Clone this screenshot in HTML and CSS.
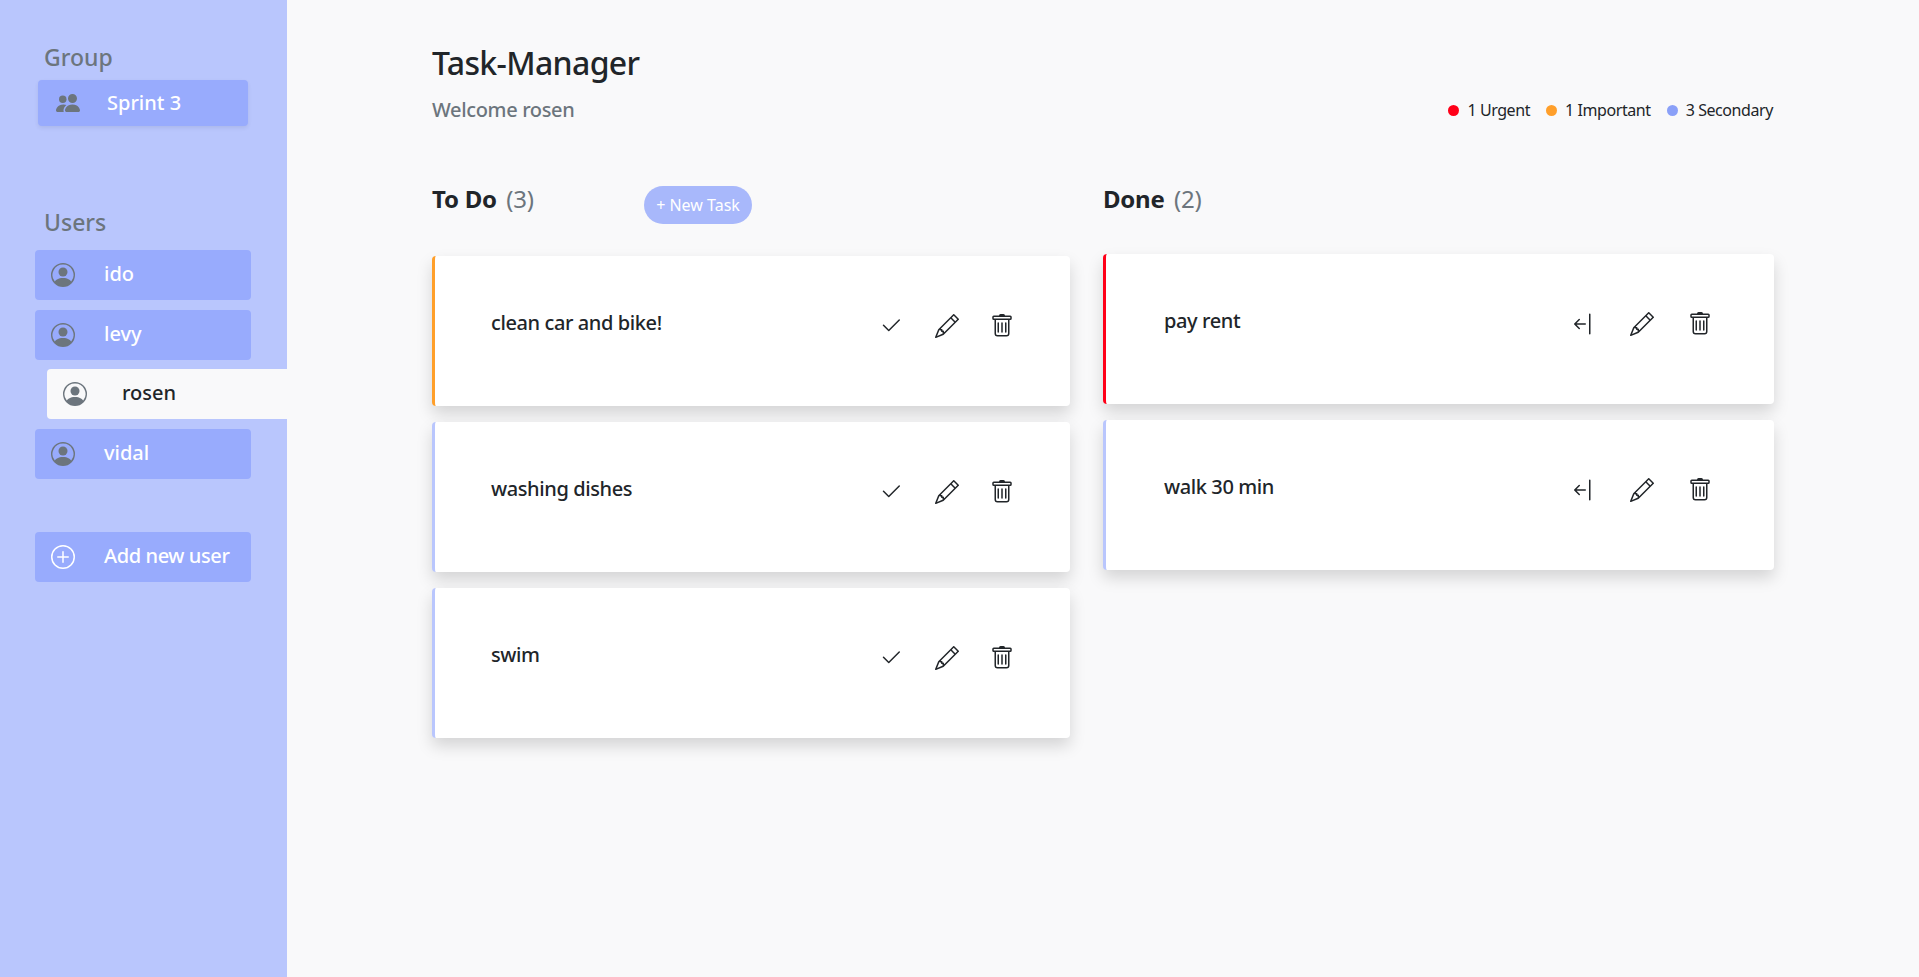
FILE: index.html
```html
<!DOCTYPE html>
<html lang="en">
<head>
<meta charset="utf-8">
<title>Task-Manager</title>
<link rel="stylesheet" href="styles.css">
</head>
<body>
<svg class="defs" aria-hidden="true">
  <symbol id="i-check" viewBox="0 0 16 16"><path d="M13.854 3.646a.5.5 0 0 1 0 .708l-7 7a.5.5 0 0 1-.708 0l-3.5-3.5a.5.5 0 1 1 .708-.708L6.5 10.293l6.646-6.647a.5.5 0 0 1 .708 0z"/></symbol>
  <symbol id="i-pencil" viewBox="0 0 16 16"><path d="M12.146.146a.5.5 0 0 1 .708 0l3 3a.5.5 0 0 1 0 .708l-10 10a.5.5 0 0 1-.168.11l-5 2a.5.5 0 0 1-.65-.65l2-5a.5.5 0 0 1 .11-.168l10-10zM11.207 2.5 13.5 4.793 14.793 3.5 12.5 1.207 11.207 2.5zm1.586 3L10.5 3.207 4 9.707V10h.5a.5.5 0 0 1 .5.5v.5h.5a.5.5 0 0 1 .5.5v.5h.293l6.5-6.5zm-9.761 5.175-.106.106-1.528 3.821 3.821-1.528.106-.106A.5.5 0 0 1 5 12.5V12h-.5a.5.5 0 0 1-.5-.5V11h-.5a.5.5 0 0 1-.468-.325z"/></symbol>
  <symbol id="i-trash" viewBox="0 0 16 16"><path d="M5.5 5.5A.5.5 0 0 1 6 6v6a.5.5 0 0 1-1 0V6a.5.5 0 0 1 .5-.5zm2.5 0a.5.5 0 0 1 .5.5v6a.5.5 0 0 1-1 0V6a.5.5 0 0 1 .5-.5zm3 .5a.5.5 0 0 0-1 0v6a.5.5 0 0 0 1 0V6z"/><path fill-rule="evenodd" d="M14.5 3a1 1 0 0 1-1 1H13v9a2 2 0 0 1-2 2H5a2 2 0 0 1-2-2V4h-.5a1 1 0 0 1-1-1V2a1 1 0 0 1 1-1H6a1 1 0 0 1 1-1h2a1 1 0 0 1 1 1h3.5a1 1 0 0 1 1 1v1zM4.118 4 4 4.059V13a1 1 0 0 0 1 1h6a1 1 0 0 0 1-1V4.059L11.882 4H4.118zM2.5 3V2h11v1h-11z"/></symbol>
  <symbol id="i-back" viewBox="0 0 16 16"><path fill-rule="evenodd" d="M12.5 15a.5.5 0 0 1-.5-.5v-13a.5.5 0 0 1 1 0v13a.5.5 0 0 1-.5.5zM10 8a.5.5 0 0 1-.5.5H3.707l2.147 2.146a.5.5 0 0 1-.708.708l-3-3a.5.5 0 0 1 0-.708l3-3a.5.5 0 1 1 .708.708L3.707 7.5H9.5a.5.5 0 0 1 .5.5z"/></symbol>
  <symbol id="i-user" viewBox="0 0 16 16"><path d="M11 6a3 3 0 1 1-6 0 3 3 0 0 1 6 0z"/><path fill-rule="evenodd" d="M0 8a8 8 0 1 1 16 0A8 8 0 0 1 0 8zm8-7a7 7 0 0 0-5.468 11.37C3.242 11.226 4.805 10 8 10s4.757 1.225 5.468 2.37A7 7 0 0 0 8 1z"/></symbol>
  <symbol id="i-plus" viewBox="0 0 16 16"><path d="M8 15A7 7 0 1 1 8 1a7 7 0 0 1 0 14zm0 1A8 8 0 1 0 8 0a8 8 0 0 0 0 16z"/><path d="M8 4a.5.5 0 0 1 .5.5v3h3a.5.5 0 0 1 0 1h-3v3a.5.5 0 0 1-1 0v-3h-3a.5.5 0 0 1 0-1h3v-3A.5.5 0 0 1 8 4z"/></symbol>
  <symbol id="i-people" viewBox="0 0 16 16"><path d="M7 14s-1 0-1-1 1-4 5-4 5 3 5 4-1 1-1 1H7zm4-6a3 3 0 1 0 0-6 3 3 0 0 0 0 6z"/><path fill-rule="evenodd" d="M5.216 14A2.238 2.238 0 0 1 5 13c0-1.355.68-2.75 1.936-3.72A6.325 6.325 0 0 0 5 9c-4 0-5 3-5 4s1 1 1 1h4.216z"/><path d="M4.5 8a2.5 2.5 0 1 0 0-5 2.5 2.5 0 0 0 0 5z"/></symbol>
</svg>

<div class="app">
  <aside class="sidebar">
    <h4 class="side-title">Group</h4>
    <div class="group-btn">
      <svg class="icon icon-grey"><use href="#i-people"/></svg>
      <span class="label label-group">Sprint 3</span>
    </div>
    <h4 class="side-title users-title">Users</h4>
    <ul class="user-list">
      <li class="user"><svg class="icon icon-grey"><use href="#i-user"/></svg><span class="label">ido</span></li>
      <li class="user"><svg class="icon icon-grey"><use href="#i-user"/></svg><span class="label">levy</span></li>
      <li class="user user-active"><svg class="icon icon-grey"><use href="#i-user"/></svg><span class="label">rosen</span></li>
      <li class="user"><svg class="icon icon-grey"><use href="#i-user"/></svg><span class="label">vidal</span></li>
    </ul>
    <div class="user add-user"><svg class="icon icon-white"><use href="#i-plus"/></svg><span class="label">Add new user</span></div>
  </aside>

  <main class="main">
    <header class="top">
      <h2 class="title">Task-Manager</h2>
      <div class="subrow">
        <p class="welcome">Welcome rosen</p>
        <div class="legend">
          <span class="legend-item"><i class="dot dot-urgent"></i>1 Urgent</span>
          <span class="legend-item"><i class="dot dot-important"></i>1 Important</span>
          <span class="legend-item"><i class="dot dot-secondary"></i>3 Secondary</span>
        </div>
      </div>
    </header>

    <div class="board">
      <section class="col col-todo">
        <div class="col-head">
          <h4 class="col-title">To Do<span class="count">(3)</span></h4>
          <button class="new-task">+ New Task</button>
        </div>
        <article class="card card-important">
          <span class="card-text">clean car and bike!</span>
          <div class="actions">
            <svg class="icon"><use href="#i-check"/></svg><svg class="icon"><use href="#i-pencil"/></svg><svg class="icon"><use href="#i-trash"/></svg>
          </div>
        </article>
        <article class="card card-secondary">
          <span class="card-text">washing dishes</span>
          <div class="actions">
            <svg class="icon"><use href="#i-check"/></svg><svg class="icon"><use href="#i-pencil"/></svg><svg class="icon"><use href="#i-trash"/></svg>
          </div>
        </article>
        <article class="card card-secondary">
          <span class="card-text">swim</span>
          <div class="actions">
            <svg class="icon"><use href="#i-check"/></svg><svg class="icon"><use href="#i-pencil"/></svg><svg class="icon"><use href="#i-trash"/></svg>
          </div>
        </article>
      </section>

      <section class="col col-done">
        <div class="col-head">
          <h4 class="col-title">Done<span class="count">(2)</span></h4>
        </div>
        <article class="card card-urgent">
          <span class="card-text">pay rent</span>
          <div class="actions">
            <svg class="icon"><use href="#i-back"/></svg><svg class="icon"><use href="#i-pencil"/></svg><svg class="icon"><use href="#i-trash"/></svg>
          </div>
        </article>
        <article class="card card-secondary">
          <span class="card-text">walk 30 min</span>
          <div class="actions">
            <svg class="icon"><use href="#i-back"/></svg><svg class="icon"><use href="#i-pencil"/></svg><svg class="icon"><use href="#i-trash"/></svg>
          </div>
        </article>
      </section>
    </div>
  </main>
</div>
</body>
</html>
```
FILE: styles.css
```css
* { box-sizing: border-box; }
html, body { margin: 0; height: 100%; }
body {
  font-family: "Noto Sans", "Open Sans", sans-serif;
  font-size: 16px;
  color: #212529;
  background: #f9f9fa;
  overflow: hidden;
}
.defs { display: none; }
.app { display: flex; height: 977px; }

.icon { width: 24px; height: 24px; flex: none; fill: #212529; display: block; }
.icon-grey { fill: #6c757d; }
.icon-white { fill: #fff; }

.sidebar {
  width: 287px;
  flex: none;
  background: #b9c6fd;
  padding: 42px 0 0;
}
.side-title {
  margin: 0 0 8px 44px;
  font-size: 23px;
  line-height: 30px;
  font-weight: 500;
  color: #6c757d;
}
.users-title { margin-top: 81px; margin-bottom: 13px; }
.group-btn {
  margin-left: 38px;
  width: 210px;
  height: 46px;
  display: flex;
  align-items: center;
  gap: 27px;
  padding-left: 18px;
  background: #98abfd;
  border-radius: 4px;
  box-shadow: 0 2px 4px rgba(0, 0, 0, .075);
  color: #fff;
  font-size: 20px;
  font-weight: 500;
}
.label { padding-bottom: 3px; }
.label-group { padding-bottom: 2px; }
.user-list { list-style: none; margin: 0; padding: 0; display: flex; flex-direction: column; gap: 9.5px; }
.user {
  margin-left: 35px;
  width: 216px;
  height: 50px;
  display: flex;
  align-items: center;
  gap: 29px;
  padding-left: 16px;
  background: #98abfd;
  border-radius: 4px;
  color: #fff;
  font-size: 20px;
  font-weight: 500;
}
.user-active {
  margin-left: 47px;
  width: 240px;
  background: #f9f9fa;
  color: #212529;
  border-radius: 4px 0 0 4px;
  gap: 35px;
}
.add-user { margin-top: 53px; letter-spacing: -.4px; }

.main { flex: none; width: 1487px; padding: 43px 0 0 145px; }
.top { width: 1342px; }
.title { margin: 0; font-size: 32px; line-height: 40px; font-weight: 500; letter-spacing: -.65px; }
.subrow { display: flex; justify-content: space-between; align-items: center; margin-top: 11px; height: 30px; }
.welcome { margin: 0; font-size: 20px; font-weight: 500; color: #6c757d; letter-spacing: -.35px; }
.legend { display: flex; gap: 16px; font-size: 16px; letter-spacing: -.42px; padding: 2px 1px 0 0; }
.legend-item { display: flex; align-items: center; gap: 8px; }
.dot { width: 11px; height: 11px; border-radius: 50%; display: block; }
.dot-urgent { background: #ff0018; }
.dot-important { background: #ff9f2a; }
.dot-secondary { background: #8aa0f8; }

.board { display: flex; gap: 33px; margin-top: 60px; width: 1342px; align-items: flex-start; }
.col-todo { width: 638px; flex: none; }
.col-done { width: 671px; flex: none; }
.col-head { display: flex; align-items: flex-start; height: 72px; }
.col-done .col-head { height: 70px; }
.col-title { margin: 0; width: 212px; font-size: 24px; line-height: 30px; font-weight: 700; letter-spacing: -.25px; }
.count { font-weight: 400; color: #6c757d; margin-left: 9.5px; }
.new-task {
  width: 108px;
  height: 38px;
  margin-top: 2px;
  border: 0;
  border-radius: 19px;
  background: #a8b8fb;
  color: #fff;
  font: inherit;
  padding: 0;
}
.card {
  height: 150px;
  margin-bottom: 16px;
  display: flex;
  align-items: flex-start;
  justify-content: space-between;
  background: #fff;
  border-left: 3px solid;
  border-radius: 4px;
  box-shadow: 0 8px 16px rgba(0, 0, 0, .15);
  padding: 51px 56px 0 56px;
}
.col-done .card { padding-right: 62px; padding-left: 58px; }
.card-important { border-left-color: #ff9f2a; }
.card-secondary { border-left-color: #b9c6fd; }
.card-urgent { border-left-color: #ff0018; }
.card-text { font-size: 20px; line-height: 32px; font-weight: 500; color: #212529; letter-spacing: -.4px; }
.actions { display: flex; gap: 31.5px; margin-top: 7px; }
.col-done .actions { gap: 34.5px; }
```
